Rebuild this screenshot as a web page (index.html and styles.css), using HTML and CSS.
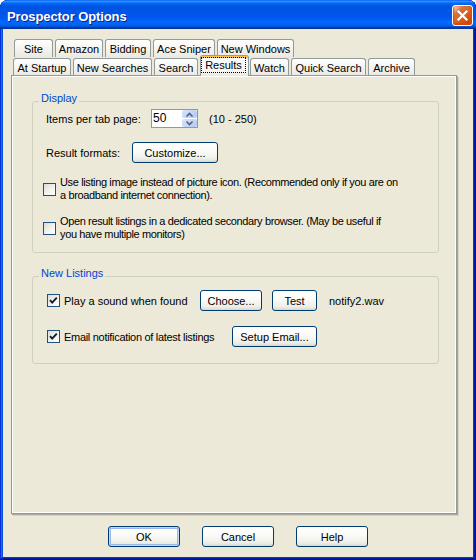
FILE: index.html
```html
<!DOCTYPE html>
<html>
<head>
<meta charset="utf-8">
<title>Prospector Options</title>
<link rel="stylesheet" href="styles.css">
</head>
<body>
<div class="window">
  <div class="titlebar">
    <span class="title">Prospector Options</span>
    <span class="close"><svg width="19" height="19" viewBox="0 0 19 19"><path d="M5.5 5.5 L13.5 13.5 M13.5 5.5 L5.5 13.5" stroke="#fff" stroke-width="2.2" stroke-linecap="square" fill="none"/></svg></span>
  </div>
  <div class="client">
    <div class="tabs">
      <div class="tabrow row1">
        <div class="tab w39">Site</div>
        <div class="tab w48">Amazon</div>
        <div class="tab w46">Bidding</div>
        <div class="tab w62">Ace Sniper</div>
        <div class="tab w77">New Windows</div>
      </div>
      <div class="tabrow row2">
        <div class="tab w58">At Startup</div>
        <div class="tab w79">New Searches</div>
        <div class="tab w44">Search</div>
        <div class="tab sel w49"><span class="focus">Results</span></div>
        <div class="tab w39">Watch</div>
        <div class="tab w75">Quick Search</div>
        <div class="tab w47">Archive</div>
      </div>
    </div>
    <div class="panel">
      <fieldset class="group g-display">
        <legend>Display</legend>
        <div class="gbody gb-display">
          <div class="frow r-items">
            <span class="lbl w105">Items per tab page:</span>
            <div class="spin">
              <span class="spin-val">50</span>
              <span class="spin-btns">
                <span class="sb"><svg width="13" height="7" viewBox="0 0 13 7"><path d="M3.5 5.5 L6.5 2.5 L9.5 5.5" stroke="#4D6185" stroke-width="1.6" fill="none"/></svg></span>
                <span class="sb"><svg width="13" height="7" viewBox="0 0 13 7"><path d="M3.5 1.5 L6.5 4.5 L9.5 1.5" stroke="#4D6185" stroke-width="1.6" fill="none"/></svg></span>
              </span>
            </div>
            <span class="range">(10 - 250)</span>
          </div>
          <div class="frow r-format">
            <span class="lbl w86">Result formats:</span>
            <button class="btn bw86">Customize...</button>
          </div>
          <div class="cbrow r-cb1">
            <span class="cb"></span>
            <span class="cbtext">Use listing image instead of picture icon. (Recommended only if you are on<br>a broadband internet connection).</span>
          </div>
          <div class="cbrow r-cb2">
            <span class="cb"></span>
            <span class="cbtext">Open result listings in a dedicated secondary browser. (May be useful if<br>you have multiple monitors)</span>
          </div>
        </div>
      </fieldset>
      <fieldset class="group g-new">
        <legend>New Listings</legend>
        <div class="gbody gb-new">
          <div class="frow r-sound">
            <span class="cbl w153"><span class="cb checked"><svg width="11" height="11" viewBox="0 0 11 11"><path d="M2 5.2 L4.2 7.6 L8.8 2.6" stroke="#1A1A2E" stroke-width="1.9" fill="none"/></svg></span><span>Play a sound when found</span></span>
            <button class="btn bw62">Choose...</button>
            <button class="btn bw45 ml10">Test</button>
            <span class="file">notify2.wav</span>
          </div>
          <div class="frow r-email">
            <span class="cbl w185"><span class="cb checked"><svg width="11" height="11" viewBox="0 0 11 11"><path d="M2 5.2 L4.2 7.6 L8.8 2.6" stroke="#1A1A2E" stroke-width="1.9" fill="none"/></svg></span><span class="tight">Email notification of latest listings</span></span>
            <button class="btn bw85">Setup Email...</button>
          </div>
        </div>
      </fieldset>
    </div>
    <div class="buttons">
      <button class="btn bw72 default">OK</button>
      <button class="btn bw72">Cancel</button>
      <button class="btn bw72">Help</button>
    </div>
  </div>
</div>
</body>
</html>
```
FILE: styles.css
```css
* { box-sizing: border-box; }
html, body { margin: 0; padding: 0; background: #ffffff; }
body {
  font-family: "Liberation Sans", Arial, sans-serif;
  font-size: 11px;
  color: #000;
}
.window {
  width: 476px;
  height: 560px;
  display: flex;
  flex-direction: column;
  background: #0831d9;
  border-radius: 8px 8px 0 0;
  overflow: hidden;
  box-shadow: inset -1px -1px #00138c, inset 1px 1px #0831d9, inset -2px -2px #001ea0, inset 2px 2px #166aee, inset -3px -3px #003bda, inset 3px 3px #0855dd;
}
.titlebar {
  height: 29px;
  flex: none;
  display: flex;
  align-items: center;
  justify-content: space-between;
  padding: 0 3px 0 7px;
  background: linear-gradient(to bottom, #0058ee 0%, #3593ff 4%, #288eff 6%, #127dff 8%, #036ffc 10%, #0262ee 14%, #0057e5 20%, #0054e3 24%, #0055eb 56%, #005bf5 66%, #026afe 76%, #0062ef 86%, #0052d6 92%, #0040ab 94%, #003092 100%);
  border-radius: 8px 8px 0 0;
}
.title {
  color: #fff;
  font-weight: bold;
  font-size: 13px;
  padding-top: 4px;
  text-shadow: 1px 1px 0 #0f1e88;
  letter-spacing: -0.1px;
}
.close {
  width: 21px;
  height: 21px;
  margin-top: 2px;
  border: 1px solid #fff;
  border-radius: 3px;
  display: flex;
  align-items: center;
  justify-content: center;
  background: radial-gradient(circle at 90% 90%, #cc4600 0%, #dc6527 55%, #cd7546 70%, #ffccb2 90%, #fff 100%);
  box-shadow: inset 0 -1px 2px 1px #da4600;
}
.client {
  flex: 1;
  margin: 0 3px 3px 3px;
  background: #ece9d8;
  padding: 10px 16px 0 8px;
  display: flex;
  flex-direction: column;
}
/* tabs */
.tabs { display: flex; flex-direction: column; flex: none; }
.tabrow { display: flex; gap: 2px; height: 18px; align-items: flex-end; }
.row1 { padding-left: 3px; }
.row2 { padding-left: 2px; }
.tab {
  border: 1px solid #919b9c;
  border-bottom: none;
  border-radius: 3px 3px 0 0;
  background: linear-gradient(to bottom, #ffffff 0%, #f6f5f1 45%, #ebe9e1 100%);
  display: flex;
  align-items: center;
  justify-content: center;
  white-space: nowrap;
  flex: none;
}
.row1 .tab { height: 18px; }
.row2 .tab { height: 17px; padding-top: 1px; }
.tab.sel {
  height: 21px;
  margin-bottom: -1px;
  margin-right: -1px;
  position: relative;
  z-index: 2;
  border-top: 1px solid #e68b2c;
  box-shadow: inset 0 2px 0 #ffc73c;
  background: linear-gradient(to bottom, #fcfcfe 0%, #f7f6f2 75%, #ece9d8 100%);
  align-items: flex-start;
  justify-content: flex-start;
  padding: 1px 0 0 0;
}
.focus {
  width: 45px;
  height: 16px;
  border: 1px dotted #000;
  text-align: center;
  line-height: 14px;
}
.w39 { width: 39px; } .w48 { width: 48px; } .w46 { width: 46px; }
.w62 { width: 62px; } .w77 { width: 77px; } .w58 { width: 58px; }
.w79 { width: 79px; } .w44 { width: 44px; } .w49 { width: 49px; }
.w75 { width: 75px; } .w47 { width: 47px; }
/* panel */
.panel {
  flex: none;
  width: 446px;
  height: 439px;
  border: 1px solid #919b9c;
  background: #ece9d8;
  box-shadow: inset 1px 1px 0 #ffffff, inset -1px -1px 0 #ffffff, 1px 1px 0 #aca899, 2px 2px 0 #d6d3c4;
  padding: 17px 17px 0 20px;
}
.group {
  margin: 0;
  padding: 0;
  border: 1px solid #d0d0bf;
  border-radius: 3px;
  min-width: 0;
  width: 407px;
}
.group legend {
  color: #0046d5;
  line-height: 11px;
  padding: 0 2px 5px 2px;
  margin-left: 6px;
}
.g-new { margin-top: 15px; }
.gb-display { padding: 0 0 11px 13px; }
.gb-new { padding: 6px 0 16px 14px; }
.frow { display: flex; align-items: center; }
.r-items { height: 19px; }
.r-format { margin-top: 14px; }
.lbl { flex: none; }
.w105 { width: 105px; }
.w86 { width: 86px; }
.spin {
  width: 47px;
  height: 19px;
  border: 1px solid #7f9db9;
  background: #fff;
  display: flex;
  justify-content: space-between;
  align-items: stretch;
  padding: 0 0 0 1px;
}
.spin-val { line-height: 17px; font-size: 12px; }
.spin-btns { width: 15px; display: flex; flex-direction: column; gap: 1px; padding: 0; }
.sb {
  flex: 1;
  border-radius: 2px;
  background: linear-gradient(135deg, #d8e3fc 0%, #c3d3f9 60%, #b3c6f3 100%);
  display: flex;
  align-items: center;
  justify-content: center;
}
.range { margin-left: 11px; }
.cbrow { display: flex; align-items: center; gap: 4px; margin-left: -3px; }
.r-cb1 { margin-top: 13px; }
.r-cb2 { margin-top: 13px; }
.cbtext { line-height: 13px; white-space: nowrap; letter-spacing: -0.37px; }
.tight { letter-spacing: -0.3px; }
.cb {
  width: 13px;
  height: 13px;
  flex: none;
  border: 1px solid #1c5180;
  background: linear-gradient(135deg, #dcdcd7 0%, #f4f4f0 60%, #ffffff 100%);
  display: flex;
  align-items: center;
  justify-content: center;
}
.cbl { display: flex; align-items: center; gap: 4px; flex: none; }
.w153 { width: 153px; }
.w185 { width: 185px; }
.r-sound { height: 21px; }
.r-email { height: 21px; margin-top: 15px; }
.ml10 { margin-left: 10px; }
.file { margin-left: 12px; }
/* buttons */
.btn {
  font-family: inherit;
  font-size: 11px;
  color: #000;
  height: 21px;
  padding: 0;
  border: 1px solid #003c74;
  border-radius: 3px;
  background: linear-gradient(to bottom, #ffffff 0%, #fbfbf9 40%, #f0efe8 80%, #e3e0d5 95%, #d6d0c5 100%);
  flex: none;
  white-space: nowrap;
}
.btn.default { box-shadow: inset 0 0 0 1px #c2d6f5, inset 0 0 0 2px #9ab8ea; }
.bw86 { width: 86px; } .bw62 { width: 62px; } .bw45 { width: 45px; }
.bw85 { width: 85px; } .bw72 { width: 72px; }
.buttons {
  flex: none;
  display: flex;
  justify-content: center;
  gap: 22px;
  margin-top: 12px;
  margin-right: -8px;
}
```
